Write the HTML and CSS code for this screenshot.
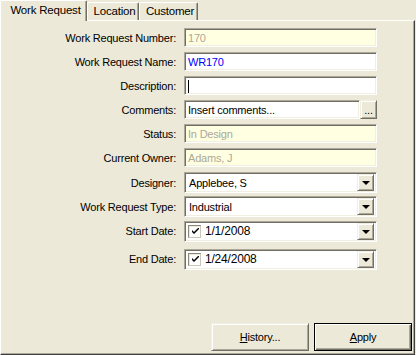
FILE: index.html
```html
<!DOCTYPE html>
<html>
	<head>
		<meta charset="UTF-8">
		<title>Work Request</title>
		<link rel="stylesheet" href="styles.css">
	</head>
	<body>
		<div id="dialog">
			<ul class="tabs">
				<li class="tab tab-wr active">Work Request</li>
				<li class="tab tab-loc">Location</li>
				<li class="tab tab-cust">Customer</li>
			</ul>
			<div class="panel">
				<div class="form">
					<div class="row">
						<label>Work Request Number:</label>
						<div class="field readonly">170</div>
					</div>
					<div class="row">
						<label>Work Request Name:</label>
						<div class="field blue">WR170</div>
					</div>
					<div class="row">
						<label>Description:</label>
						<div class="field"><span class="caret"></span></div>
					</div>
					<div class="row">
						<label>Comments:</label>
						<div class="field short">Insert comments...</div>
						<div class="dots">...</div>
					</div>
					<div class="row">
						<label>Status:</label>
						<div class="field readonly">In Design</div>
					</div>
					<div class="row">
						<label>Current Owner:</label>
						<div class="field readonly">Adams, J</div>
					</div>
					<div class="row combo-row">
						<label>Designer:</label>
						<div class="combo"><span class="value">Applebee, S</span><span class="drop"></span></div>
					</div>
					<div class="row combo-row">
						<label>Work Request Type:</label>
						<div class="combo"><span class="value">Industrial</span><span class="drop"></span></div>
					</div>
					<div class="row date-row">
						<label>Start Date:</label>
						<div class="combo date">
							<span class="check">
								<svg width="7" height="7" viewBox="0 0 7 7"><path d="M0 2 L0 4 L2 6 L7 1 L7 0 L6 0 L2 4 L1 3 Z" fill="#000"/></svg>
							</span>
							<span class="value">1/1/2008</span><span class="drop"></span>
						</div>
					</div>
					<div class="row date-row">
						<label>End Date:</label>
						<div class="combo date">
							<span class="check">
								<svg width="7" height="7" viewBox="0 0 7 7"><path d="M0 2 L0 4 L2 6 L7 1 L7 0 L6 0 L2 4 L1 3 Z" fill="#000"/></svg>
							</span>
							<span class="value">1/24/2008</span><span class="drop"></span>
						</div>
					</div>
				</div>
				<div class="buttons">
					<button class="btn"><u>H</u>istory...</button>
					<button class="btn default"><u>A</u>pply</button>
				</div>
			</div>
		</div>
	</body>
</html>
```

FILE: styles.css
```css
*{
	margin: 0;
	padding: 0;
	box-sizing: border-box;
}
body{
	background: #ece9d8;
	font-family: "Liberation Sans", Arial, sans-serif;
	font-size: 11px;
	letter-spacing: -0.2px;
	color: #000;
}
ul,li{
	list-style: none;
}
#dialog{
	width: 416px;
	height: 355px;
}

/* tabs */
.tabs{
	display: flex;
	align-items: flex-end;
	height: 20px;
}
.tab{
	height: 18px;
	line-height: 16px;
	text-align: center;
	padding-left: 3px;
	font-size: 11.5px;
	border-top: 1px solid #fff;
	border-left: 1px solid #fff;
	border-right: 1px solid #716f64;
	box-shadow: inset -1px 0 #aca899;
	border-radius: 2px 2px 0 0;
}
.tab.active{
	position: relative;
	height: 21px;
	margin-bottom: -1px;
	line-height: 18px;
	padding-left: 4px;
	background: #ece9d8;
	z-index: 1;
}
.tab-wr{ width: 87px; }
.tab-loc{ width: 52px; }
.tab-cust{ width: 59px; }

/* panel */
.panel{
	width: 415px;
	height: 335px;
	border-top: 1px solid #fff;
	border-left: 1px solid #fff;
	border-right: 1px solid #404040;
	border-bottom: 1px solid #404040;
	box-shadow: inset -1px -1px #aca899;
	display: flex;
	flex-direction: column;
	padding-top: 7px;
}
.form{
	display: flex;
	flex-direction: column;
}
.row{
	display: flex;
	align-items: center;
	height: 19px;
	margin-bottom: 5px;
}
.combo-row{
	height: 21px;
	margin-bottom: 3px;
}
.date-row{
	height: 22px;
	margin-bottom: 6px;
}
.row label{
	width: 175px;
	text-align: right;
	margin-right: 8px;
	white-space: nowrap;
}

/* sunken boxes */
.field, .combo, .check{
	border: 1px solid;
	border-color: #aca899 #fff #fff #aca899;
	box-shadow: inset 1px 1px #716f64, inset -1px -1px #f1efe2;
	background: #fff;
}
.field{
	width: 193px;
	height: 19px;
	padding: 2px 3px;
	line-height: 15px;
	white-space: nowrap;
	overflow: hidden;
}
.field.readonly{
	background: #ffffe1;
	color: #aca899;
}
.field.blue{
	color: #0000ff;
}
.field.short{
	width: 176px;
}
.caret{
	display: inline-block;
	width: 1px;
	height: 13px;
	margin-top: 1px;
	background: #000;
	vertical-align: top;
}

/* raised buttons */
.dots, .drop, .btn{
	border: 1px solid;
	border-color: #f1efe2 #716f64 #716f64 #f1efe2;
	box-shadow: inset 1px 1px #fff, inset -1px -1px #aca899;
	background: #ece9d8;
}
.dots{
	width: 17px;
	height: 19px;
	text-align: center;
	line-height: 18px;
}
.combo{
	width: 193px;
	height: 21px;
	padding: 2px;
	display: flex;
	align-items: center;
}
.combo .value{
	flex: 1;
	padding-left: 2px;
	white-space: nowrap;
}
.drop{
	position: relative;
	width: 17px;
	height: 17px;
}
.drop:after{
	content: "";
	position: absolute;
	left: 4px;
	top: 6px;
	border-left: 4px solid transparent;
	border-right: 4px solid transparent;
	border-top: 4px solid #000;
}
.date .value{
	padding-left: 4px;
	font-size: 12px;
}
.check{
	flex: none;
	width: 13px;
	height: 13px;
	margin-left: 1px;
	display: flex;
	align-items: center;
	justify-content: center;
	border-color: #8a877a #c9c6b8 #c9c6b8 #8a877a;
	box-shadow: inset 1px 1px #ece9d8;
}
.check svg{
	margin: 1px 0 0 1px;
}

/* bottom buttons */
.buttons{
	margin-top: auto;
	display: flex;
	justify-content: flex-end;
	gap: 5px;
	padding: 0 2px 3px 0;
}
.btn{
	width: 98px;
	height: 28px;
	font-family: inherit;
	font-size: 11px;
	letter-spacing: -0.2px;
	color: #000;
}
.btn.default{
	border: 1px solid #000;
	box-shadow: inset 1px 1px #fff, inset -1px -1px #716f64, inset -2px -2px #aca899;
}
```
